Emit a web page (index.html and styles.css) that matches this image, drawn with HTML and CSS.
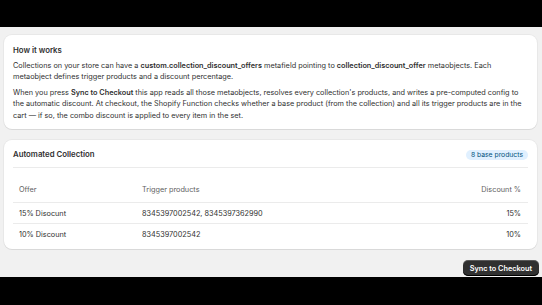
FILE: index.html
```html
<!DOCTYPE html>
<html lang="en">
<head>
  <meta charset="UTF-8">
  <meta name="viewport" content="width=device-width, initial-scale=1.0">
  <link rel="stylesheet" href="styles.css">
  <title>Automated Collection</title>
</head>
<body>
  <div class="top-bar"></div>
  <div class="page">
    <div class="card">
      <h2 class="card-title">How it works</h2>
      <p>Collections on your store can have a <strong>custom.collection_discount_offers</strong> metafield pointing to <strong>collection_discount_offer</strong> metaobjects. Each metaobject defines trigger products and a discount percentage.</p>
      <p>When you press <strong>Sync to Checkout</strong> this app reads all those metaobjects, resolves every collection's products, and writes a pre-computed config to the automatic discount. At checkout, the Shopify Function checks whether a base product (from the collection) and all its trigger products are in the cart — if so, the combo discount is applied to every item in the set.</p>
    </div>

    <div class="card table-card">
      <div class="card-header">
        <h2 class="card-title">Automated Collection</h2>
        <span class="badge">8 base products</span>
      </div>
      <table class="offers">
        <thead>
          <tr>
            <th class="col-offer">Offer</th>
            <th>Trigger products</th>
            <th class="num">Discount %</th>
          </tr>
        </thead>
        <tbody>
          <tr>
            <td>15% Disocunt</td>
            <td>8345397002542, 8345397362990</td>
            <td class="num">15%</td>
          </tr>
          <tr>
            <td>10% Discount</td>
            <td>8345397002542</td>
            <td class="num">10%</td>
          </tr>
        </tbody>
      </table>
    </div>

    <div class="actions">
      <button class="primary-button">Sync to Checkout</button>
    </div>
  </div>
</body>
</html>
```

FILE: styles.css
```css
body {
  margin: 0;
  background-color: #000000;
  font-family: Inter, 'Noto Sans', sans-serif;
  color: #303030;
  font-size: 7.3px;
}

.top-bar {
  height: 27px;
}

.page {
  height: 250px;
  overflow: hidden;
  background-color: #f1f1f1;
  padding: 8px 5px 0 4px;
  box-sizing: border-box;
}

.card {
  background-color: #ffffff;
  border-radius: 8px;
  box-shadow: 0 1px 0 0 rgba(26, 26, 26, 0.07), 0 0 0 1px rgba(26, 26, 26, 0.04);
  padding: 9.5px 9px 8px;
  margin-bottom: 11px;
}

.card-title {
  margin: 0 0 4px;
  font-size: 7.8px;
  line-height: 11px;
  font-weight: 600;
}

.card p {
  margin: 0 0 4px;
  line-height: 11.5px;
}

.card p:last-child {
  margin-bottom: 0;
}

.card strong {
  font-weight: 600;
}

.table-card {
  padding: 9px 9px 5px;
}

.card-header {
  display: flex;
  justify-content: space-between;
  align-items: center;
  padding-bottom: 7px;
  border-bottom: 1px solid #ebebeb;
}

.card-header .card-title {
  margin: 0;
}

.badge {
  background-color: #e0f0ff;
  color: #00527c;
  border-radius: 5px;
  padding: 0 5px;
  font-size: 6.8px;
  line-height: 10px;
}

.offers {
  width: 100%;
  border-collapse: collapse;
  margin-top: 9px;
}

.offers th,
.offers td {
  text-align: left;
  padding: 0 7px 0 6px;
  height: 20px;
  font-weight: 400;
}

.offers th {
  color: #616161;
  height: 25px;
}

.offers tr {
  border-bottom: 1px solid #ebebeb;
}

.offers tbody tr:last-child {
  border-bottom: none;
}

.col-offer {
  width: 110px;
}

.offers .num {
  text-align: right;
}

.actions {
  display: flex;
  justify-content: flex-end;
  margin-right: -2px;
}

.primary-button {
  background-color: #303030;
  color: #ffffff;
  border: none;
  border-radius: 5px;
  font-family: inherit;
  font-size: 7.3px;
  font-weight: 600;
  height: 16px;
  padding: 0 7px;
  box-shadow: inset 0 -1px 0 #000000, inset 0 1px 0 rgba(255, 255, 255, 0.2);
}
```
